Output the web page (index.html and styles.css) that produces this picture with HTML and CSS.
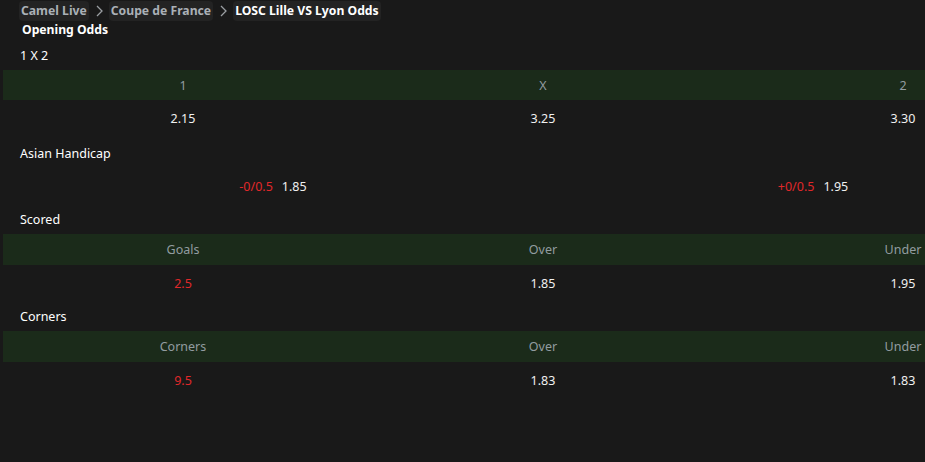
FILE: index.html
```html
<!DOCTYPE html>
<html lang="en">
<head>
    <meta charset="UTF-8">
    <title>LOSC Lille VS Lyon Odds</title>
    <link rel="stylesheet" href="styles.css">
</head>
<body>
    <nav class="breadcrumb">
        <a href="#" class="crumb">Camel Live</a>
        <svg class="chevron" viewBox="0 0 10 14" width="10" height="14"><path d="M3 2l5 5-5 5" fill="none" stroke="currentColor" stroke-width="1.3"/></svg>
        <a href="#" class="crumb">Coupe de France</a>
        <svg class="chevron" viewBox="0 0 10 14" width="10" height="14"><path d="M3 2l5 5-5 5" fill="none" stroke="currentColor" stroke-width="1.3"/></svg>
        <span class="crumb current">LOSC Lille VS Lyon Odds</span>
    </nav>

    <h1 class="page-title">Opening Odds</h1>

    <div class="odds">
        <div class="market">
            <div class="market-title">1 X 2</div>
            <div class="odds-row head">
                <div>1</div>
                <div>X</div>
                <div>2</div>
            </div>
            <div class="odds-row first">
                <div>2.15</div>
                <div>3.25</div>
                <div>3.30</div>
            </div>
        </div>

        <div class="market">
            <div class="market-title">Asian Handicap</div>
            <div class="handicap-row">
                <div class="handicap"><span class="red">-0/0.5</span><span>1.85</span></div>
                <div class="handicap"><span class="red">+0/0.5</span><span>1.95</span></div>
            </div>
        </div>

        <div class="market">
            <div class="market-title">Scored</div>
            <div class="odds-row head">
                <div>Goals</div>
                <div>Over</div>
                <div>Under</div>
            </div>
            <div class="odds-row">
                <div class="red">2.5</div>
                <div>1.85</div>
                <div>1.95</div>
            </div>
        </div>

        <div class="market">
            <div class="market-title">Corners</div>
            <div class="odds-row head">
                <div>Corners</div>
                <div>Over</div>
                <div>Under</div>
            </div>
            <div class="odds-row">
                <div class="red">9.5</div>
                <div>1.83</div>
                <div>1.83</div>
            </div>
        </div>
    </div>
</body>
</html>
```

FILE: styles.css
```css
* {
    margin: 0;
    padding: 0;
    box-sizing: border-box;
}

body {
    background: #191919;
    color: #f0f0f0;
    font-family: 'Noto Sans', 'Open Sans', sans-serif;
    font-size: 12.5px;
    padding: 1px 0 0 3px;
}

.breadcrumb {
    display: flex;
    align-items: center;
    height: 20px;
    padding-left: 16px;
}

.crumb {
    display: block;
    background: #232323;
    border-radius: 4px;
    padding: 0 2px;
    height: 20px;
    line-height: 20px;
    font-size: 12.2px;
    font-weight: 700;
    color: #aab0b6;
    text-decoration: none;
}

.crumb.current {
    color: #ffffff;
}

.chevron {
    color: #9a9ea2;
    margin: 0 5px;
}

.page-title {
    font-size: 12.2px;
    font-weight: 700;
    color: #ffffff;
    padding-left: 19px;
    height: 17px;
    line-height: 17px;
}

.market-title {
    height: 32px;
    line-height: 36px;
    padding-left: 17px;
    color: #ffffff;
}

.odds-row {
    display: grid;
    grid-template-columns: 360px 360px 1fr;
    height: 34px;
    padding-top: 2px;
    align-items: center;
    text-align: center;
    color: #f0f0f0;
}

/* last column is only partly visible, keep its centre where the full one would be */
.odds-row div:last-child {
    padding-left: 158px;
}

.odds-row.head {
    background: #1b2b1a;
    height: 31px;
    padding-top: 0;
    color: #929ca0;
}

.market:first-child .odds-row.head {
    height: 30px;
}

.odds-row.first {
    height: 36px;
    padding-top: 0;
}

.handicap-row {
    display: grid;
    grid-template-columns: 540px 1fr;
    height: 34px;
    padding-top: 2px;
    align-items: center;
}

.handicap {
    display: flex;
    justify-content: center;
    gap: 9px;
}

.handicap:last-child {
    padding-left: 158px;
}

.red {
    color: #e0282a;
}
```
